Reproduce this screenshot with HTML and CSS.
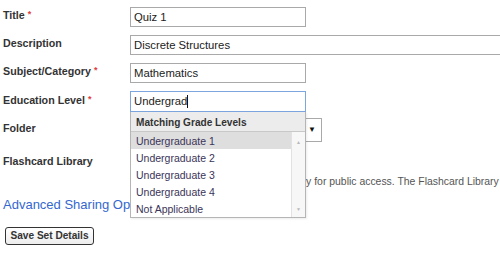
FILE: index.html
```html
<!DOCTYPE html>
<html lang="en">

<head>
  <meta charset="UTF-8" />
  <meta name="viewport" content="width=device-width, initial-scale=1.0" />
  <title>Set Details</title>
  <link rel="stylesheet" href="styles.css">
</head>

<body>
  <form class="set-form">
    <div class="row">
      <label class="label">Title <span class="req">*</span></label>
      <div class="field"><input class="text" type="text" value="Quiz 1" /></div>
    </div>

    <div class="row">
      <label class="label">Description</label>
      <div class="field"><input class="text wide" type="text" value="Discrete Structures" /></div>
    </div>

    <div class="row">
      <label class="label">Subject/Category <span class="req">*</span></label>
      <div class="field"><input class="text" type="text" value="Mathematics" /></div>
    </div>

    <div class="row row-edu">
      <label class="label">Education Level <span class="req">*</span></label>
      <div class="field">
        <div class="text focused">Undergrad<span class="caret"></span></div>

        <div class="suggest">
          <div class="suggest-head">Matching Grade Levels</div>
          <div class="suggest-body">
            <ul class="suggest-list">
              <li class="active">Undergraduate 1</li>
              <li>Undergraduate 2</li>
              <li>Undergraduate 3</li>
              <li>Undergraduate 4</li>
              <li>Not Applicable</li>
            </ul>
            <div class="scrollbar">
              <span class="arrow">&#9650;</span>
              <span class="arrow">&#9660;</span>
            </div>
          </div>
        </div>
      </div>
    </div>

    <div class="row row-folder">
      <label class="label">Folder</label>
      <div class="field">
        <div class="select"><span class="select-arrow">&#9660;</span></div>
      </div>
    </div>

    <div class="row row-library">
      <label class="label">Flashcard Library</label>
      <div class="field">
        <div class="check-line"></div>
        <div class="note">Include this set in the Flashcard Library for public access. The Flashcard Library</div>
      </div>
    </div>

    <a class="adv-link" href="#">Advanced Sharing Options</a>

    <div class="actions">
      <button class="save-btn" type="button">Save Set Details</button>
    </div>
  </form>
</body>

</html>
```

FILE: styles.css
```css
body {
  margin: 0;
  font-family: "Liberation Sans", Arial, sans-serif;
  background: #fff;
  color: #333;
  overflow: hidden;
}

.set-form {
  padding-top: 7px;
}

.row {
  display: flex;
  align-items: center;
  height: 20px;
  margin-bottom: 8px;
}

.label {
  width: 127px;
  padding-left: 3px;
  flex-shrink: 0;
  font-size: 10.7px;
  font-weight: bold;
  color: #333;
  margin-top: -4px;
}

.req {
  color: #e04040;
  font-size: 9px;
  vertical-align: top;
}

.field {
  position: relative;
}

.text {
  box-sizing: border-box;
  width: 176px;
  height: 20px;
  margin: 0;
  padding: 0 3px;
  border: 1px solid #a9a9a9;
  font-family: "Liberation Sans", Arial, sans-serif;
  font-size: 11.3px;
  color: #222;
  background: #fff;
  outline: none;
}

.text.wide {
  width: 390px;
}

.row-edu {
  height: 21px;
  margin-bottom: 6px;
}

.focused {
  height: 21px;
  line-height: 19px;
  border-color: #7ea6de;
}

.caret {
  display: inline-block;
  width: 1px;
  height: 13px;
  background: #111;
  vertical-align: -3px;
}

.suggest {
  position: absolute;
  top: 100%;
  left: 0;
  z-index: 2;
  width: 176px;
  box-sizing: border-box;
  border: 1px solid #b5b5b5;
  border-top: none;
  background: #fff;
  box-shadow: 1px 1px 2px rgba(0, 0, 0, 0.08);
}

.suggest-head {
  height: 19px;
  line-height: 21px;
  padding-left: 5px;
  background: #ececec;
  border-bottom: 1px solid #c8c8c8;
  font-size: 10.1px;
  font-weight: bold;
  color: #333;
}

.suggest-body {
  display: flex;
}

.suggest-list {
  list-style: none;
  margin: 0;
  padding: 0;
  flex: 1;
}

.suggest-list li {
  height: 17px;
  line-height: 19px;
  padding-left: 5px;
  font-size: 10.5px;
  color: #3b3458;
}

.suggest-list li.active {
  background: #dedede;
}

.scrollbar {
  width: 13px;
  border-left: 1px solid #e2e2e2;
  background: #f7f7f7;
  display: flex;
  flex-direction: column;
  justify-content: space-between;
  align-items: center;
  padding: 7px 0 5px;
}

.arrow {
  font-size: 5px;
  color: #b8b8b8;
  line-height: 6px;
}

.row-folder {
  height: 24px;
  margin-bottom: 10px;
}

.select {
  box-sizing: border-box;
  width: 192px;
  height: 24px;
  border: 1px solid #a9a9a9;
  background: #fff;
  position: relative;
}

.select-arrow {
  position: absolute;
  right: 5px;
  top: 6px;
  font-size: 8px;
  color: #111;
}

.row-library {
  height: auto;
  align-items: flex-start;
  margin-bottom: 5px;
}

.row-library .label {
  line-height: 18px;
  margin-top: 0;
}

.check-line {
  height: 21px;
}

.note {
  line-height: 18px;
  font-size: 10.43px;
  color: #555;
  white-space: nowrap;
}

.adv-link {
  display: block;
  padding-left: 3px;
  line-height: 17px;
  font-size: 13px;
  color: #3467cf;
  text-decoration: none;
}

.actions {
  padding: 12px 0 0 5px;
}

.save-btn {
  box-sizing: border-box;
  width: 89px;
  height: 18px;
  padding: 0;
  border: 1px solid #333;
  border-radius: 3px;
  background: linear-gradient(#fff, #ededed);
  font-family: "Liberation Sans", Arial, sans-serif;
  font-size: 10.1px;
  font-weight: bold;
  color: #333;
}
```
